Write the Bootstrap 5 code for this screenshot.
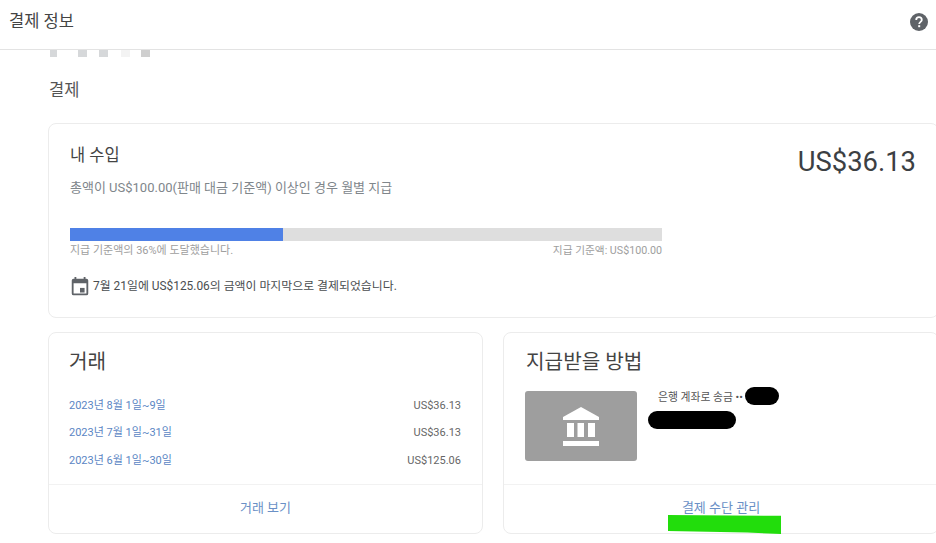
<!DOCTYPE html>
<html lang="ko">
<head>
    <meta charset="UTF-8" />
    <meta name="viewport" content="width=device-width, initial-scale=1" />
    <title>결제 정보</title>
    <link href="https://cdn.jsdelivr.net/npm/bootstrap@5.3.3/dist/css/bootstrap.min.css" rel="stylesheet" />
    <style>
        html, body { height: 543px; overflow: hidden; }
        body {
            font-family: Roboto, "Noto Sans CJK KR", sans-serif;
            color: #3c4043;
            background: #fff;
        }
        .top-bar { height: 50px; border-bottom: 1px solid #e3e3e3; padding: 0 8px 0 9px; }
        .top-bar h1 { font-size: 16.5px; font-weight: 400; margin: 0 0 5px; color: #444; }
        .help-icon { margin: 0 0 6px 0; }
        .page-body { padding-left: 48px; margin-right: -3px; }
        .blur-row { height: 7px; filter: blur(.7px); }
        .blur-row span { width: 9px; height: 7px; background: #d6d8da; }
        .blur-row .g0 { margin-left: 2px; width: 7px; }
        .blur-row .g1 { margin-left: 21px; }
        .blur-row .g2 { margin-left: 12px; }
        .blur-row .g3 { margin-left: 13px; background: #f3f3f3; }
        .blur-row .g4 { margin-left: 11px; background: #cfcfcf; }
        .section-name { font-size: 16.5px; line-height: 20px; margin: 24px 0 22px 1px; color: #555; }
        .pay-card { border: 1px solid #ececec; border-radius: 8px; background: #fff; }
        .earn-card { height: 195px; padding: 21px 20px 0 21px; margin-bottom: 14px; position: relative; }
        .earn-card h2 { font-size: 16.5px; font-weight: 400; line-height: 22px; margin: 0; color: #444; }
        .earn-sub { font-size: 13px; line-height: 18px; margin-top: 12px; color: #80868b; }
        .earn-total { position: absolute; top: 21px; right: 22px; font-size: 27.4px; line-height: 34px; color: #3c4043; }
        .goal-track { width: 592px; height: 13px; background: #dedede; margin-top: 31px; }
        .goal-fill { height: 13px; background: #4f81e6; }
        .goal-labels { width: 592px; font-size: 11px; line-height: 14px; color: #9e9e9e; margin-top: 3px; }
        .goal-labels .goal-limit { font-size: 10.7px; }
        .paid-line { font-size: 11.9px; color: #4a4d50; margin: 19px 0 0 -1px; gap: 2px; height: 20px; }
        .low-row { gap: 20px; }
        .low-card { height: 202px; }
        .card-left { width: 435px; flex: none; }
        .card-right { flex: 1 1 auto; position: relative; }
        .low-main { height: 152px; padding: 15px 21px 0 20px; border-bottom: 1px solid #f2f2f2; }
        .low-main h3 { font-size: 20.2px; font-weight: 400; line-height: 28px; margin: 0 0 22px; color: #444; }
        .pay-card .bank-title { margin: 0 0 18px 2px; }
        .bank-body { margin-left: 1px; }
        .tx-line { font-size: 11px; line-height: 16px; margin-bottom: 11.4px; color: #666; }
        .tx-line a { color: #5b86c4; text-decoration: none; }
        .low-foot { height: 49px; font-size: 13px; padding-bottom: 4px; }
        .low-foot a { color: #6a90c6; text-decoration: none; }
        .bank-thumb { width: 112px; height: 70px; background: #9e9e9e; border-radius: 3px; flex: none; margin-top: -3px; }
        .bank-text { font-size: 10.8px; line-height: 14px; margin: -3px 0 0 21px; color: #555; }
        .scribble { position: absolute; background: #000; border-radius: 9px; }
        .scribble-short { left: 241px; top: 54px; width: 34px; height: 18px; }
        .scribble-long { left: 144px; top: 78px; width: 88px; height: 18px; }
        .marker { position: absolute; left: 164px; top: 182px; width: 113px; height: 19px; background: #22dd0c; clip-path: polygon(0 0, 100% 4%, 100% 100%, 70% 92%, 0 84%); }
    </style>
</head>
<body>
    <header class="top-bar d-flex align-items-center justify-content-between">
        <h1>결제 정보</h1>
        <svg class="help-icon" width="18" height="18" viewBox="0 0 18 18" aria-hidden="true">
            <circle cx="9" cy="9" r="9" fill="#5f6368"/>
            <path d="M6.2 7a2.8 2.8 0 0 1 5.6 0c0 1.8-2.6 2-2.6 4" fill="none" stroke="#fff" stroke-width="1.8"/>
            <rect x="8.2" y="12.2" width="2" height="2" fill="#fff"/>
        </svg>
    </header>

    <main class="page-body">
        <div class="blur-row d-flex" aria-hidden="true">
            <span class="g0"></span><span class="g1"></span><span class="g2"></span><span class="g3"></span><span class="g4"></span>
        </div>
        <div class="section-name">결제</div>

        <section class="pay-card earn-card">
            <h2>내 수입</h2>
            <div class="earn-sub">총액이 US$100.00(판매 대금 기준액) 이상인 경우 월별 지급</div>
            <div class="earn-total">US$36.13</div>
            <div class="goal-track"><div class="goal-fill" style="width: 36%"></div></div>
            <div class="goal-labels d-flex justify-content-between">
                <span>지급 기준액의 36%에 도달했습니다.</span>
                <span class="goal-limit">지급 기준액: US$100.00</span>
            </div>
            <div class="paid-line d-flex align-items-center">
                <svg width="22" height="22" viewBox="0 0 24 24" aria-hidden="true">
                    <path fill="#5f6368" d="M19 3h-1V1h-2v2H8V1H6v2H5a2 2 0 0 0-2 2v14a2 2 0 0 0 2 2h14a2 2 0 0 0 2-2V5a2 2 0 0 0-2-2zm0 16H5V8h14v11z"/>
                    <rect fill="#5f6368" x="12" y="13" width="5" height="5"/>
                </svg>
                <span>7월 21일에 US$125.06의 금액이 마지막으로 결제되었습니다.</span>
            </div>
        </section>

        <div class="low-row d-flex">
            <section class="pay-card low-card card-left">
                <div class="low-main">
                    <h3>거래</h3>
                    <div class="tx-line d-flex justify-content-between"><a href="#">2023년 8월 1일~9일</a><span>US$36.13</span></div>
                    <div class="tx-line d-flex justify-content-between"><a href="#">2023년 7월 1일~31일</a><span>US$36.13</span></div>
                    <div class="tx-line d-flex justify-content-between"><a href="#">2023년 6월 1일~30일</a><span>US$125.06</span></div>
                </div>
                <div class="low-foot d-flex align-items-center justify-content-center"><a href="#">거래 보기</a></div>
            </section>

            <section class="pay-card low-card card-right">
                <div class="low-main">
                    <h3 class="bank-title">지급받을 방법</h3>
                    <div class="bank-body d-flex">
                        <div class="bank-thumb d-flex align-items-center justify-content-center">
                            <svg width="36" height="39" viewBox="0 0 36 39" aria-hidden="true">
                                <path fill="#fff" d="M18 0 36 10v3H0v-3z"/>
                                <rect fill="#fff" x="4" y="16" width="7" height="14"/>
                                <rect fill="#fff" x="14.5" y="16" width="6.5" height="14"/>
                                <rect fill="#fff" x="25" y="16" width="7" height="14"/>
                                <rect fill="#fff" x="0" y="34" width="36" height="5"/>
                            </svg>
                        </div>
                        <div class="bank-text">은행 계좌로 송금 ••</div>
                    </div>
                </div>
                <div class="low-foot d-flex align-items-center justify-content-center"><a href="#">결제 수단 관리</a></div>
                <div class="scribble scribble-short"></div>
                <div class="scribble scribble-long"></div>
                <div class="marker"></div>
            </section>
        </div>
    </main>

    <script src="https://cdn.jsdelivr.net/npm/bootstrap@5.3.3/dist/js/bootstrap.bundle.min.js"></script>
</body>
</html>
